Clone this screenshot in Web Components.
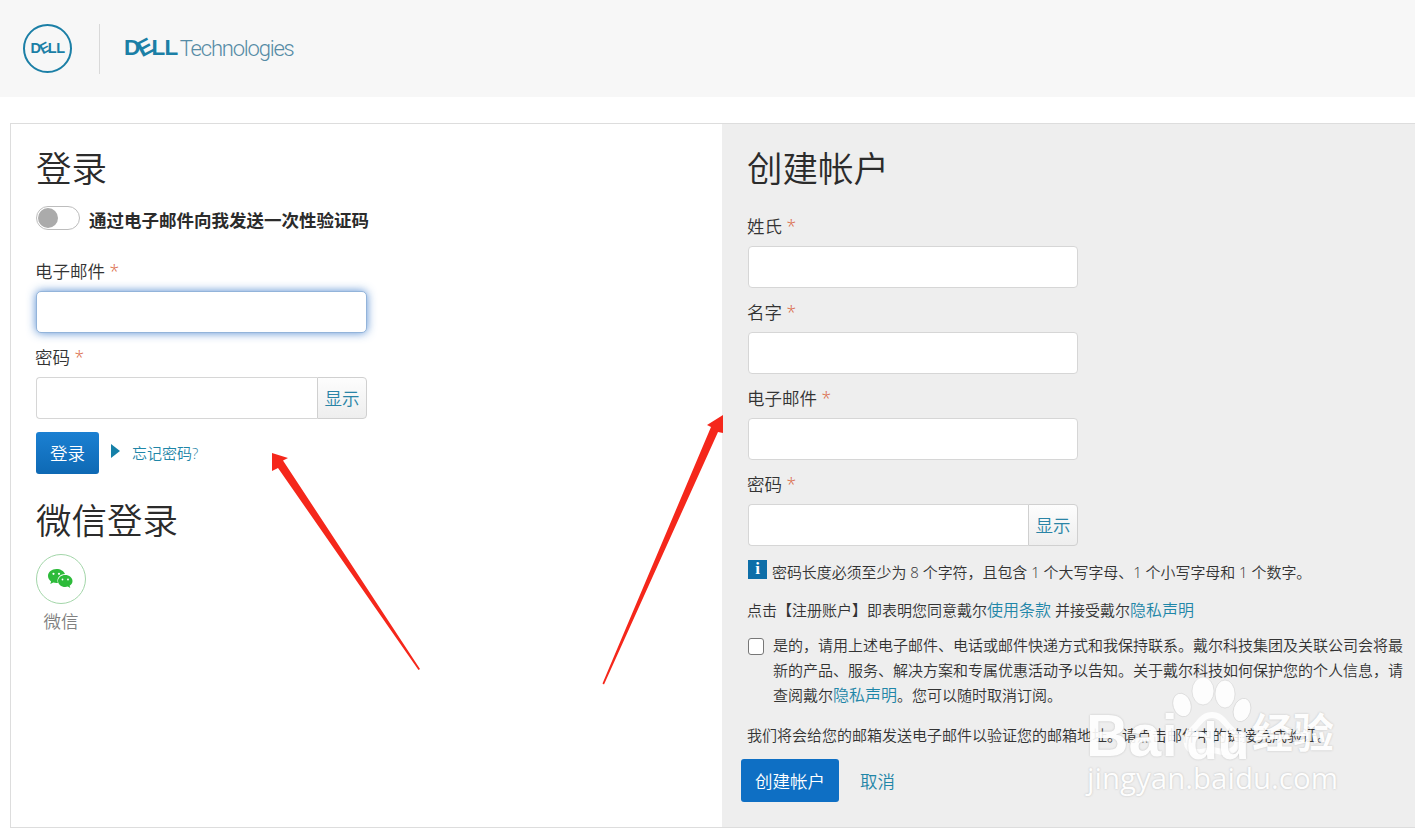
<!DOCTYPE html>
<html lang="zh">
<head>
<meta charset="utf-8">
<title>Dell Technologies</title>
<style>
	html, body {
		margin: 0;
		padding: 0;
		background: #fff;
	}
	body {
		position: relative;
		height: 828px;
		overflow: hidden;
		color: #2b2b2b;
		font-family: "Open Sans", "Noto Sans CJK SC", sans-serif;
		font-size: 15px;
	}
</style>
</head>
<body>
	<dell-header></dell-header>
	<auth-panel>
		<login-box slot="left"></login-box>
		<signup-box slot="right"></signup-box>
	</auth-panel>
	<arrow-marks></arrow-marks>
	<baidu-mark></baidu-mark>

<script>
class dellHeader extends HTMLElement {
	constructor() {
		super();
		const shadow = this.attachShadow({ mode: 'open' });
		shadow.innerHTML = `
			<style>
				:host {
					display: flex;
					align-items: center;
					height: 97px;
					background: #f7f7f7;
				}
				.badge {
					box-sizing: border-box;
					width: 49px;
					height: 49px;
					margin-left: 23px;
					border: 2.5px solid #1b7fa6;
					border-radius: 50%;
					display: flex;
					align-items: center;
					justify-content: center;
				}
				.sep {
					width: 1px;
					height: 50px;
					margin: 0 24px 0 27px;
					background: #d9d9d9;
				}
				.word {
					display: inline-flex;
					align-items: center;
					font-family: "Liberation Sans", sans-serif;
					font-weight: 700;
					color: #1b7fa6;
					line-height: 1;
				}
				.word b {
					display: inline-block;
					transform: rotate(-28deg);
					margin: 0 -.06em;
				}
				.badge .word {
					font-size: 14.5px;
					letter-spacing: -.5px;
				}
				.logo .word {
					font-size: 22.5px;
					letter-spacing: -.6px;
				}
				.logo {
					display: flex;
					align-items: center;
					margin-top: -1px;
				}
				.tech {
					margin-left: 2px;
					font-family: Roboto, sans-serif;
					font-weight: 300;
					font-size: 22px;
					letter-spacing: -1.2px;
					color: #558ba5;
				}
			</style>
			<div class="badge"><span class="word">D<b>E</b>LL</span></div>
			<div class="sep"></div>
			<div class="logo"><span class="word">D<b>E</b>LL</span><span class="tech">Technologies</span></div>
		`;
	}
}
customElements.define('dell-header', dellHeader);

class authPanel extends HTMLElement {
	constructor() {
		super();
		const shadow = this.attachShadow({ mode: 'open' });
		shadow.innerHTML = `
			<style>
				:host {
					display: grid;
					grid-template-columns: 711px 1fr;
					box-sizing: border-box;
					height: 705px;
					margin: 26px 0 0 10px;
					border: 1px solid #ddd;
					border-right: 0;
				}
			</style>
			<slot name="left"></slot>
			<slot name="right"></slot>
		`;
	}
}
customElements.define('auth-panel', authPanel);

const FIELD_STYLE = `
	:host {
		display: block;
		width: var(--field-width, 331px);
		margin-bottom: 14px;
	}
	label {
		display: block;
		height: 22px;
		margin: 0 0 8px -1px;
		font-size: 17.5px;
		font-weight: 350;
		line-height: 20px;
		color: #333;
	}
	label i {
		font-style: normal;
		color: #d9633d;
	}
	.row {
		display: flex;
		height: 42px;
	}
	input {
		flex: 1;
		min-width: 0;
		box-sizing: border-box;
		height: 42px;
		padding: 0 10px;
		background: #fff;
		border: 1px solid #d6d6d6;
		border-radius: 4px;
		outline: 0;
	}
	:host([focused]) input {
		border-color: #93b4da;
		border-radius: 5px;
		box-shadow: 0 0 10px rgba(70, 130, 205, .9);
	}
	:host([toggle]) input {
		border-radius: 4px 0 0 4px;
		border-right: 0;
	}
	button {
		width: 50px;
		padding: 0 0 2px;
		font: inherit;
		font-size: 17.5px;
		font-weight: 350;
		color: #2a84a6;
		background: linear-gradient(#fdfdfd, #eeeeee);
		border: 1px solid #d0d0d0;
		border-radius: 0 4px 4px 0;
	}
`;

class formField extends HTMLElement {
	constructor() {
		super();
		const shadow = this.attachShadow({ mode: 'open' });
		const toggle = this.hasAttribute('toggle');
		shadow.innerHTML = `
			<style>${FIELD_STYLE}</style>
			<label>${this.getAttribute('label')} <i>*</i></label>
			<div class="row">
				<input type="${toggle ? 'password' : 'text'}">
				${toggle ? '<button type="button">显示</button>' : ''}
			</div>
		`;
	}
}
customElements.define('form-field', formField);

class loginBox extends HTMLElement {
	constructor() {
		super();
		const shadow = this.attachShadow({ mode: 'open' });
		shadow.innerHTML = `
			<style>
				:host {
					display: block;
					padding: 25px 0 0 25px;
				}
				h2 {
					margin: 0;
					font-size: 35.5px;
					font-weight: 350;
					line-height: 38px;
					color: #2b2b2b;
				}
				.otp {
					display: flex;
					align-items: center;
					gap: 9px;
					height: 24px;
					margin: 19px 0 31px;
					font-size: 17.5px;
					font-weight: 700;
				}
				.otp span {
					padding-top: 2px;
				}
				.switch {
					box-sizing: border-box;
					width: 44px;
					height: 24px;
					padding: 1px;
					background: #fff;
					border: 1px solid #bdbdbd;
					border-radius: 12px;
				}
				.switch i {
					display: block;
					width: 20px;
					height: 20px;
					background: #ababab;
					border-radius: 50%;
				}
				.actions {
					display: flex;
					align-items: flex-start;
					margin-top: -1px;
				}
				.primary {
					width: 63px;
					height: 42px;
					padding: 0 0 2px;
					font: inherit;
					font-size: 17.5px;
					font-weight: 350;
					color: #fff;
					background: linear-gradient(#1b80d2, #0e69b4);
					border: 0;
					border-radius: 3px;
				}
				.forgot {
					display: flex;
					align-items: center;
					height: 42px;
					margin-left: 12px;
				}
				.forgot svg {
					margin: -4px 13px 0 0;
				}
				.forgot a {
					margin: -2px 0 0 -1px;
					font-size: 15px;
					font-weight: 350;
					color: #1f86a8;
					text-decoration: none;
				}
				.wechat-title {
					margin-top: 27px;
				}
				.wechat {
					display: inline-flex;
					flex-direction: column;
					align-items: center;
					margin-top: 15px;
				}
				.ring {
					box-sizing: border-box;
					display: flex;
					align-items: center;
					justify-content: center;
					width: 50px;
					height: 50px;
					border: 1px solid #a3d6a9;
					border-radius: 50%;
				}
				.ring svg {
					margin-left: -2px;
				}
				.wechat span {
					margin-top: 6px;
					font-size: 17.5px;
					font-weight: 350;
					line-height: 22px;
					color: #808080;
				}
			</style>
			<h2>登录</h2>
			<div class="otp"><div class="switch"><i></i></div><span>通过电子邮件向我发送一次性验证码</span></div>
			<form-field label="电子邮件" focused></form-field>
			<form-field label="密码" toggle></form-field>
			<div class="actions">
				<button class="primary" type="button">登录</button>
				<div class="forgot">
					<svg width="9" height="14" viewBox="0 0 9 14"><path d="M0 0L9 7L0 14Z" fill="#1580a8"/></svg>
					<a href="#">忘记密码?</a>
				</div>
			</div>
			<h2 class="wechat-title">微信登录</h2>
			<div class="wechat">
				<div class="ring">
					<svg width="28" height="24" viewBox="0 0 28 24">
						<path d="M10.5 2C5.8 2 2 5.100 2 9c0 2.200 1.200 4.100 3.100 5.400L4.300 17l3-1.500c1 .3 2 .5 3.200.5.500 0 1 0 1.400-.1-.3-.8-.4-1.500-.4-2.200C11.500 9.900 15 7 19 7c-1-3-4.500-5-8.500-5z" fill="#2dbb3a"/>
						<path d="M26.500 14c0-3.300-3.300-6-7.300-6s-7.200 2.700-7.200 6 3.200 6 7.200 6c.9 0 1.800-.1 2.600-.4l2.500 1.400-.7-2.300c1.800-1.100 2.900-2.800 2.900-4.700z" fill="#2dbb3a"/>
						<circle cx="7.500" cy="6.800" r="1.100" fill="#fff"/>
						<circle cx="13" cy="6.800" r="1.100" fill="#fff"/>
						<circle cx="16.500" cy="12.500" r=".9" fill="#fff"/>
						<circle cx="22" cy="12.500" r=".9" fill="#fff"/>
					</svg>
				</div>
				<span>微信</span>
			</div>
		`;
	}
}
customElements.define('login-box', loginBox);

class signupBox extends HTMLElement {
	constructor() {
		super();
		const shadow = this.attachShadow({ mode: 'open' });
		shadow.innerHTML = `
			<style>
				:host {
					display: block;
					padding: 25px 0 0 26px;
					background: #eeeeee;
					--field-width: 330px;
				}
				h2 {
					margin: 0 0 29px -1px;
					font-size: 35.5px;
					font-weight: 350;
					line-height: 38px;
					color: #2b2b2b;
				}
				p {
					margin: 0 0 0 -1px;
					font-size: 15px;
					font-weight: 350;
					line-height: 25px;
					color: #333;
				}
				a {
					font-size: 16px;
					color: #1f86a8;
					text-decoration: none;
				}
				.info {
					display: flex;
					gap: 5px;
					margin-left: 0;
				}
				.info b {
					flex: none;
					width: 19px;
					height: 19px;
					text-align: center;
					font-family: "Liberation Serif", serif;
					font-size: 17px;
					line-height: 17px;
					color: #fff;
					background: #0d6ea8;
				}
				.info span {
					font-size: 14.95px;
				}
				.terms {
					margin-top: 13px;
				}
				.opt {
					display: flex;
					gap: 9px;
					width: 660px;
					margin: 10px 0 0;
				}
				.opt input {
					appearance: none;
					flex: none;
					box-sizing: border-box;
					width: 16px;
					height: 17px;
					margin: 5px 0 0;
					background: #fff;
					border: 1px solid #777;
					border-radius: 3px;
				}
				.opt p {
					width: 632px;
					margin: 0;
				}
				.verify {
					margin-top: 15px;
				}
				.actions {
					display: flex;
					align-items: center;
					gap: 21px;
					margin: 11px 0 0 -7px;
				}
				.actions button {
					width: 98px;
					height: 43px;
					padding: 0;
					font: inherit;
					font-size: 17.5px;
					font-weight: 350;
					color: #fff;
					background: #0e6fc4;
					border: 0;
					border-radius: 3px;
				}
				.actions a {
					font-size: 17.5px;
					font-weight: 350;
				}
			</style>
			<h2>创建帐户</h2>
			<form-field label="姓氏"></form-field>
			<form-field label="名字"></form-field>
			<form-field label="电子邮件"></form-field>
			<form-field label="密码" toggle></form-field>
			<p class="info"><b>i</b><span>密码长度必须至少为 8 个字符，且包含 1 个大写字母、1 个小写字母和 1 个数字。</span></p>
			<p class="terms">点击【注册账户】即表明您同意戴尔<a href="#">使用条款</a> 并接受戴尔<a href="#">隐私声明</a></p>
			<div class="opt">
				<input type="checkbox">
				<p>是的，请用上述电子邮件、电话或邮件快递方式和我保持联系。戴尔科技集团及关联公司会将最新的产品、服务、解决方案和专属优惠活动予以告知。关于戴尔科技如何保护您的个人信息，请查阅戴尔<a href="#">隐私声明</a>。您可以随时取消订阅。</p>
			</div>
			<p class="verify">我们将会给您的邮箱发送电子邮件以验证您的邮箱地址。请点击邮件中的链接完成验证。</p>
			<div class="actions">
				<button type="button">创建帐户</button>
				<a href="#">取消</a>
			</div>
		`;
	}
}
customElements.define('signup-box', signupBox);

// the red annotation arrows drawn over the shot
class arrowMarks extends HTMLElement {
	constructor() {
		super();
		const shadow = this.attachShadow({ mode: 'open' });
		shadow.innerHTML = `
			<style>
				:host {
					position: absolute;
					top: 0;
					left: 0;
					width: 1415px;
					height: 828px;
					pointer-events: none;
				}
			</style>
			<svg width="1415" height="828" viewBox="0 0 1415 828">
				<polygon points="272,453 288,458 283,460.500 420,669 418.500,670 278,468 272,471" fill="#f5271b"/>
				<polygon points="723,415 707,425 711,427 602.500,683.500 604,684.500 718,432 723,433" fill="#f5271b"/>
			</svg>
		`;
	}
}
customElements.define('arrow-marks', arrowMarks);

// washed out watermark in the lower right corner
class baiduMark extends HTMLElement {
	constructor() {
		super();
		const shadow = this.attachShadow({ mode: 'open' });
		shadow.innerHTML = `
			<style>
				:host {
					position: absolute;
					left: 1085px;
					top: 675px;
					width: 270px;
					height: 130px;
					color: #fff;
					pointer-events: none;
				}
				div, svg {
					position: absolute;
					white-space: nowrap;
					text-shadow: 0 0 2px rgba(120, 120, 120, .45);
					opacity: .9;
				}
				.bai, .du {
					top: 26px;
					font-family: "Liberation Sans", sans-serif;
					font-weight: 700;
					font-size: 59px;
					line-height: 70px;
				}
				.bai { left: 1px; }
				.du { left: 101px; font-size: 52px; top: 31px; }
				.cn {
					left: 167px;
					top: 30px;
					font-family: "Noto Sans CJK SC", sans-serif;
					font-weight: 700;
					font-size: 41px;
					line-height: 50px;
				}
				.site {
					left: 2px;
					top: 83px;
					font-family: "Open Sans", sans-serif;
					font-size: 29.500px;
					line-height: 40px;
				}
				svg {
					left: 78px;
					top: 0;
				}
			</style>
			<svg width="100" height="80" viewBox="0 0 100 80">
				<g fill="#fff" stroke="#cfcfcf" stroke-width=".6">
					<ellipse cx="19" cy="30" rx="9" ry="12" transform="rotate(-18 19 30)"/>
					<ellipse cx="40" cy="16" rx="11" ry="14"/>
					<ellipse cx="62" cy="19" rx="10" ry="14"/>
					<ellipse cx="79" cy="35" rx="8.500" ry="12" transform="rotate(18 79 35)"/>
					<path d="M49 40c-10 0-13 9-20 15-7 6-9 20 5 22 6 1 11-2 15-2s9 3 15 2c14-2 12-16 5-22-7-6-10-15-20-15z" fill="none" stroke="#fff" stroke-width="6"/>
				</g>
			</svg>
			<div class="bai">Bai</div>
			<div class="du">du</div>
			<div class="cn">经验</div>
			<div class="site">jingyan.baidu.com</div>
		`;
	}
}
customElements.define('baidu-mark', baiduMark);
</script>
</body>
</html>
